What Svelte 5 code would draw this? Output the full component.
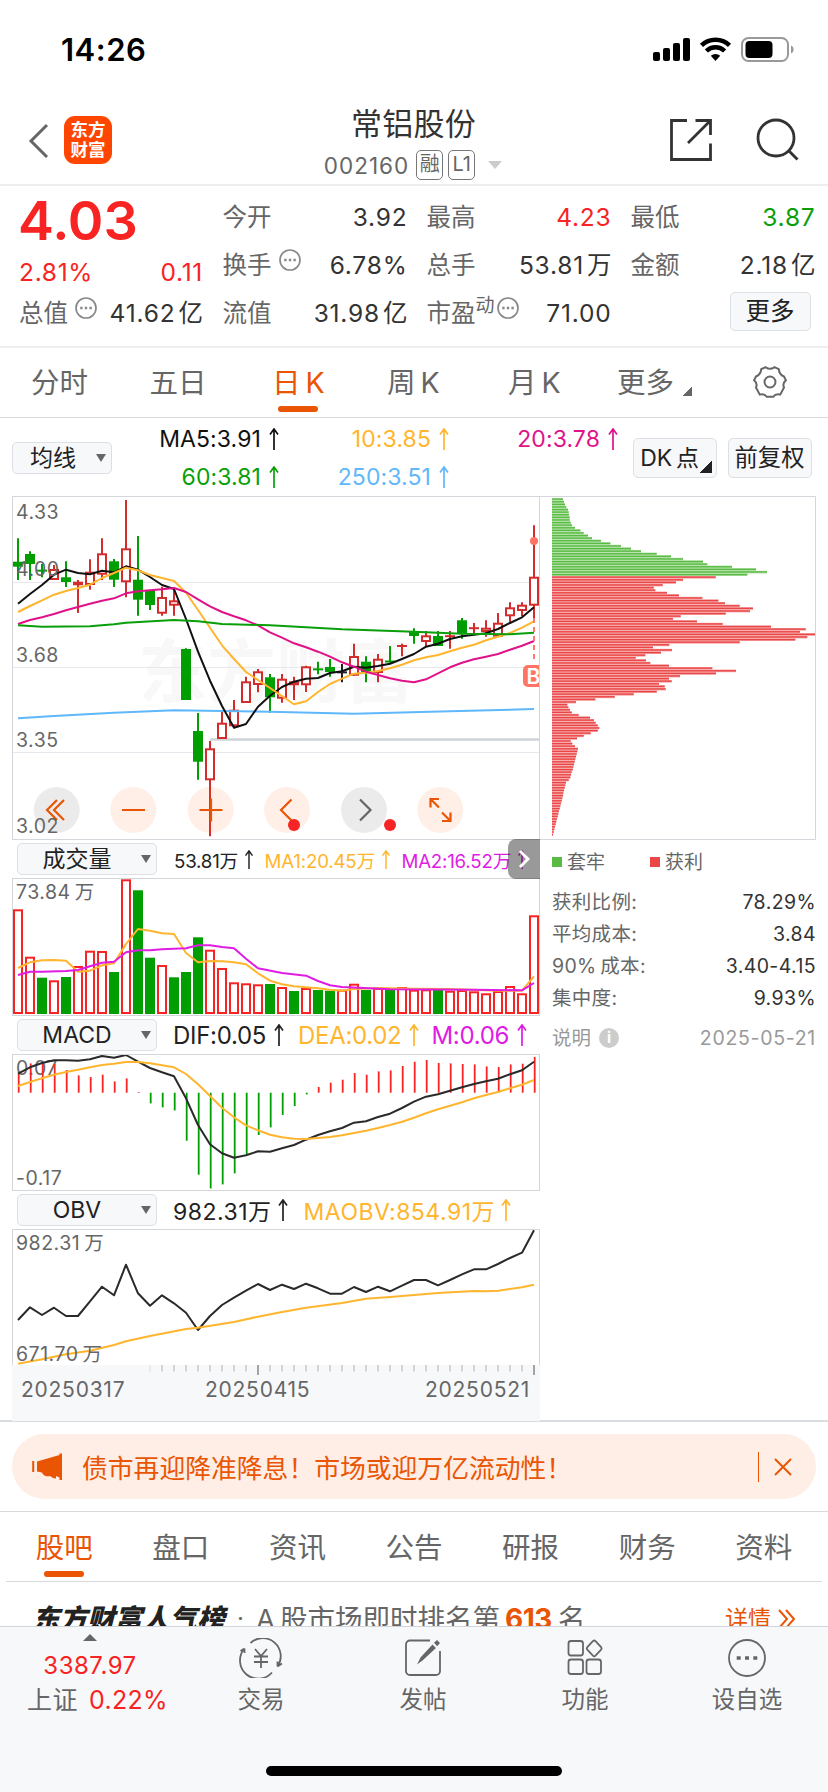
<script>
    // Horizontal layout shared by every chart: 44 trading days, 12px apart
    const STEP = 12;
    const FIRST_X = 6;
    const BAR_PITCH = 2.6;

    const quotes = [
        [
            { label: '今开', value: '3.92' },
            { label: '最高', value: '4.23', tone: 'up' },
            { label: '最低', value: '3.87', tone: 'down' }
        ],
        [
            { label: '换手', value: '6.78%', info: true },
            { label: '总手', value: '53.81', unit: '万' },
            { label: '金额', value: '2.18', unit: '亿' }
        ],
        [
            { label: '流值', value: '31.98', unit: '亿' },
            { label: '市盈', value: '71.00', sup: '动', info: true }
        ]
    ];

    const averages = [
        { text: 'MA5:3.91', tone: 'black' },
        { text: '10:3.85', tone: 'amber' },
        { text: '20:3.78', tone: 'pink' },
        { text: '60:3.81', tone: 'down' },
        { text: '250:3.51', tone: 'sky' }
    ];

    const costs = [
        { label: '获利比例:', value: '78.29%' },
        { label: '平均成本:', value: '3.84' },
        { label: '90%\u2009成本:', value: '3.40-4.15' },
        { label: '集中度:', value: '9.93%' }
    ];

    const newsTabs = ['股吧', '盘口', '资讯', '公告', '研报', '财务', '资料'];

    // [direction, high, body top, body bottom, low]
    const candles = [
        ['g', 42.3, 65.7, 70.7, 84], ['g', 55.3, 58, 68, 84], ['g', 68, 74, 75.3, 81.3], ['r', 69, 73, 84, 84],
        ['g', 65.3, 81.3, 86, 91], ['r', 84, 85.7, 89.3, 117], ['r', 63.3, 75.7, 89, 93.7], ['r', 42.3, 57.3, 78.7, 84],
        ['g', 63, 65.3, 83.7, 91], ['r', 4, 52.3, 86.3, 101.3], ['g', 40, 83.7, 103.7, 119.7], ['g', 94, 94, 109, 114],
        ['r', 90.7, 101, 117.7, 119.7], ['r', 91, 104.3, 109.7, 119.7], ['g', 152.3, 153, 204, 204], ['g', 217, 235, 265.7, 283.7],
        ['r', 245, 252.3, 284.3, 340.3], ['r', 214, 226.7, 243, 243], ['r', 204, 213.7, 230.3, 232], ['r', 180.7, 185.3, 207, 207],
        ['r', 173, 175.3, 189, 196.3], ['g', 178, 181.3, 201.3, 216.7], ['r', 178, 182.7, 202.7, 206.7], ['r', 180.7, 185.3, 189.3, 204],
        ['r', 169.7, 170.3, 189.3, 196], ['g', 165.7, 172.7, 174, 178.3], ['g', 163, 171, 176, 180.7], ['k', 168, 175.7, 177, 186.3],
        ['r', 147.7, 160, 179.7, 179.7], ['g', 160.3, 165.7, 176.3, 186.3], ['r', 158, 162.7, 177, 186.3], ['g', 150, 164.7, 166.3, 166.7],
        ['r', 147.7, 149.5, 150.5, 160.3], ['g', 132.3, 135, 140, 147.7], ['r', 135, 139.3, 146, 150.3], ['g', 135, 140, 150, 150],
        ['r', 135, 139.7, 140.7, 152.7], ['g', 122, 124.3, 137.7, 142.7], ['r', 127, 131.7, 132.7, 137.7], ['r', 124.3, 131.7, 136, 140.7],
        ['r', 117, 126.7, 140.7, 140.7], ['r', 106.3, 111.3, 120.3, 126.3], ['r', 106.3, 108.7, 115, 120], ['r', 29.3, 80.7, 109.7, 122.3]
    ];

    const ma5 = [107.7, 98, 89, 78.7, 73.7, 77, 78.3, 74.7, 76.3, 70.3, 73.7, 81, 89, 93, 123, 155.7, 184.7, 210, 231.7, 228, 210.7, 199.7, 191, 185.7, 182.7, 182, 177, 175.3, 170.7, 171.7, 170, 167.7, 163, 158, 150.7, 147.7, 143, 140.3, 138.7, 137.3, 133, 127, 121.3, 111.3];
    const ma10 = [116, 110, 104.3, 98.7, 95, 92, 88.7, 82, 77, 71.7, 74.3, 79, 82, 85, 96.7, 114, 131.7, 149.3, 163, 176, 184, 192, 200, 208.3, 205.3, 196, 188, 182.7, 177.7, 176.7, 175, 172.3, 168.7, 164.3, 161.3, 159, 155.3, 151.7, 148.7, 144.3, 140.7, 137, 131.7, 125.3];
    const ma20 = [128, 124, 121.3, 118, 114.3, 111, 107.7, 104.7, 102.3, 97.3, 95.3, 94.3, 93.3, 92, 96, 103.3, 110.3, 116, 120.3, 124.3, 129.3, 136.3, 141.7, 147.3, 151.3, 155.7, 160.7, 166.3, 170.7, 175.7, 179, 182.3, 184.7, 186.3, 183.3, 177.3, 171.3, 166.7, 163.3, 160.7, 158, 153.7, 149.7, 145];
    const ma60 = [[0, 129.3], [2, 130.7], [6, 130.3], [8, 128.3], [9, 126.7], [13, 124], [15, 125.3], [17, 128], [21, 129.3], [27, 133.3], [33, 135.7], [37, 137.7], [41, 138.3], [43, 136.7]];
    const ma250 = [[0, 222.3], [3, 220], [8, 216.7], [13, 214.3], [17, 215], [21, 215.7], [28, 217.7], [36, 215.3], [43, 213]];

    // Share of holders by price, highest price first
    const trapped = [11, 12, 13, 14.3, 16, 16.7, 17, 17.7, 17.7, 18.7, 20, 23, 28.3, 31.7, 36, 40, 49, 58.3, 69, 79, 89, 104.7, 119, 131, 151, 155.3, 180, 204, 215, 195.3];
    const profit = [163.7, 131, 124, 110.7, 101.7, 103.3, 115, 127, 150.3, 166.3, 173, 187.7, 201, 198, 173.7, 128.7, 121, 145, 170.7, 219, 253.7, 248, 263.3, 255.3, 243.3, 187.7, 117.3, 101, 120, 109, 93.3, 83.7, 94, 98.3, 117, 160.3, 184, 164, 128, 117, 119.7, 107, 112.7, 113.7, 104.7, 81.7, 62.7, 43.3, 24, 15.3, 16.3, 18, 19.7, 26.7, 38, 42, 43.7, 45.7, 47.3, 45.7, 38.7, 31.7, 25, 18.7, 20.3, 23, 26, 25.3, 24.7, 24, 23.3, 22.7, 22, 21.3, 20.7, 19.7, 19, 18.3, 16.7, 14, 13.3, 12.7, 12, 11.3, 11, 10.3, 9.7, 9, 8.3, 7.7, 7, 6.3, 5.7, 5, 4.3, 3.7, 3, 2.3, 1.7, 1];
    const holders = [...trapped, ...profit];

    const volumeUp = '11010111010010001111101010011010111011111111';
    const volumes = [104.7, 57.3, 36.3, 33.7, 37, 48, 63.3, 63, 42, 134.7, 123.7, 56.3, 49, 36.7, 42, 76.7, 64.3, 46, 31.7, 30.7, 29.7, 30, 27, 23, 26, 24, 23.3, 24.3, 30.3, 24, 26, 24.3, 27, 24.3, 24.7, 24.3, 23.3, 24, 22.7, 20.7, 23, 28, 20.7, 98.7];
    const volMa1 = [[0, 90], [1, 84.3], [2, 82.3], [3, 82], [4, 82.7], [5, 93.7], [6, 92.7], [7, 87.3], [8, 85.3], [9, 66], [10, 51], [11, 52.7], [12, 55.3], [13, 56], [14, 75], [15, 84.3], [16, 83], [17, 83.3], [18, 84.3], [19, 86.3], [20, 95.3], [21, 102.7], [22, 106.3], [23, 108.3], [24, 109.3], [25, 110.3], [26, 111.7], [27, 112.7], [28, 111], [30, 110], [33, 110.7], [36, 111], [40, 112.7], [42, 112.7], [43, 98.3]];
    const volMa2 = [[0, 97], [1, 93.7], [2, 93.7], [4, 93], [5, 92], [6, 88.3], [7, 84.7], [8, 83.7], [9, 74.3], [10, 72.3], [11, 72.3], [12, 71.3], [14, 70.3], [15, 67.3], [16, 67.3], [17, 69], [18, 70.3], [19, 80.7], [20, 90.3], [22, 95], [24, 97.7], [25, 103], [26, 107.3], [27, 109], [31, 111.3], [38, 111.7], [42, 112.3], [43, 105]];

    const macd = [19.3, 29.3, 29.3, 28.7, 22.7, 17.3, 15.7, 18, 11.3, 14.3, 0.7, -10.7, -14.7, -17.7, -48, -82, -95.7, -91.7, -80.7, -61.3, -42.3, -34.7, -22.3, -13.3, -1.7, 5.7, 10, 13, 19.7, 18, 21.3, 22.3, 26.7, 31, 32.7, 29.7, 29.3, 28.7, 28.3, 26.3, 25.7, 28.3, 29, 35.7];
    const dif = [19.7, 13.3, 9, 6.3, 6.3, 6.7, 5.3, 2, 3.7, 1, 7.7, 14, 18.3, 22.3, 44.3, 71, 90.3, 99.3, 103.7, 101.3, 97.3, 97.7, 94.3, 91, 85.7, 81, 77.3, 74, 68.7, 67.3, 63, 59.7, 54, 47.7, 42.7, 40.3, 36.7, 33.3, 30, 27.3, 24.7, 20.3, 16.3, 7.7];
    const dea = [32, 28, 24.3, 20.7, 18, 15.7, 13.3, 11, 9.7, 8, 8, 9.3, 11.3, 13.3, 20, 30.3, 42, 53.7, 63.3, 71.3, 76.3, 80.7, 83.3, 84.7, 85, 84, 83, 81.3, 79, 76.7, 74, 71, 67.7, 63.7, 59.3, 55.3, 51.7, 48.3, 44.3, 41, 38, 34.3, 30.7, 26];

    const obv = [91, 78.3, 86, 78.7, 87, 87, 72.3, 57.7, 66.3, 35.7, 64.3, 76.7, 66.3, 74.3, 83.7, 101, 87, 76, 68.7, 61.7, 55, 61, 55.7, 60, 54.7, 59.3, 64.7, 64.7, 58, 63, 57.7, 62.3, 56.7, 51, 51, 56.3, 51, 45.3, 40.3, 40.3, 35, 29, 23.7, 1.3];
    const maObv = [[0, 134.7], [2, 130.3], [4, 125.3], [6, 121.7], [8, 116], [9, 112.3], [11, 107], [14, 100], [15, 98.7], [18, 93], [20, 87.7], [22, 83], [24, 78.7], [27, 74], [29, 69.7], [31, 68], [35, 64], [38, 62], [39, 62.3], [40, 61.7], [42, 58.3], [43, 55.7]];

    const ticks = Array.from({ length: 33 }, (_, i) => i + 11);

    const x = (i) => FIRST_X + i * STEP;

    // Accepts plain y values (one per day) or sparse [day, y] pairs
    function line(points) {
        return points
            .map((p, i) => (Array.isArray(p) ? `${x(p[0])},${p[1]}` : `${x(i)},${p}`))
            .join(' ');
    }
</script>

{#snippet arrow()}
    <svg class="arrow" viewBox="0 0 10 22" width="10" height="22">
        <path d="M5 22V1M1 6.5L5 1l4 5.5" />
    </svg>
{/snippet}

{#snippet info()}
    <svg class="info" viewBox="0 0 22 22" width="22" height="22">
        <circle cx="11" cy="11" r="10" />
        <path d="M5.2 11h2.4M9.8 11h2.4M14.4 11h2.4" />
    </svg>
{/snippet}

{#snippet picker(name)}
    <button class="picker">
        <span>{name}</span>
        <i class="caret"></i>
    </button>
{/snippet}

<div class="page">
    <div class="status">
        <span class="clock">14:26</span>
        <svg viewBox="0 0 142 26" width="142" height="26">
            <rect x="0" y="15" width="7" height="9" rx="2" />
            <rect x="10" y="11" width="7" height="13" rx="2" />
            <rect x="20" y="6" width="7" height="18" rx="2" />
            <rect x="30" y="1" width="7" height="23" rx="2" />
            <path d="M48.5 8.4A20 20 0 0 1 76.5 8.4" class="wifi" />
            <path d="M53.4 14A13 13 0 0 1 71.6 14" class="wifi" />
            <path d="M57.8 18.8a7 7 0 0 1 9.4 0L62.5 24z" />
            <rect x="89" y="1" width="46" height="23" rx="6.5" class="shell" />
            <rect x="92.5" y="4" width="27" height="17" rx="4" />
            <path d="M138 8.500c3.400 1.200 3.400 6.800 0 8z" class="tip" />
        </svg>
    </div>

    <header>
        <div class="side">
            <svg viewBox="0 0 22 36" width="22" height="36" class="back"><path d="M19 2L3 18l16 16" /></svg>
            <div class="brand"><span>东方</span><span>财富</span></div>
        </div>
        <div class="title">
            <h1>常铝股份</h1>
            <div class="code">
                <span class="num">002160</span>
                <span class="tag">融</span>
                <span class="tag">L1</span>
                <i class="drop"></i>
            </div>
        </div>
        <div class="side end">
            <svg viewBox="0 0 44 44" width="44" height="44" class="tool">
                <path d="M18 2.500H2.500v39h39V25.500M26.500 2.500h15V17M41 3L19 25" />
            </svg>
            <svg viewBox="0 0 44 44" width="44" height="44" class="tool">
                <circle cx="20" cy="20" r="18" />
                <path d="M32.500 32.500L41.500 41.500" />
            </svg>
        </div>
    </header>

    <section class="summary">
        <div class="price">
            <strong>4.03</strong>
            <div class="change"><span>2.81%</span><span>0.11</span></div>
            <div class="cell">
                <span class="label">总值{@render info()}</span>
                <span class="value">41.62<em>亿</em></span>
            </div>
        </div>
        <div class="quotes">
            {#each quotes as row}
                {#each row as q}
                    <div class="cell">
                        <span class="label">{q.label}{#if q.sup}<small>{q.sup}</small>{/if}{#if q.info}{@render info()}{/if}</span>
                        <span class="value {q.tone ?? ''}">{q.value}{#if q.unit}<em>{q.unit}</em>{/if}</span>
                    </div>
                {/each}
            {/each}
            <div class="cell last"><button class="more">更多</button></div>
        </div>
    </section>

    <nav class="periods">
        <span>分时</span>
        <span>五日</span>
        <span class="active">日<em>K</em></span>
        <span>周<em>K</em></span>
        <span>月<em>K</em></span>
        <span>更多<i class="corner"></i></span>
        <svg viewBox="1.500 1.500 31 31" width="34" height="34">
            <path d="M13 3.500Q17 6.500 21 3.500L25 5.300Q25.300 10.300 29.800 12L31.500 15.500Q28 18.500 29.800 22L26.300 28.500Q22 27.500 20 30.500H14Q12 27.500 7.700 28.500L4.200 22Q6 18.500 2.500 15.500L4.200 12Q8.700 10.300 9 5.300Z" />
            <circle cx="17" cy="17" r="5" />
        </svg>
    </nav>

    <div class="averages">
        <button class="picker small"><span>均线</span><i class="caret"></i></button>
        <div class="ma-grid">
            {#each averages as ma}
                <span class={ma.tone}>{ma.text}{@render arrow()}</span>
            {/each}
        </div>
        <button class="chip">DK&thinsp;点<i class="corner"></i></button>
        <button class="chip">前复权</button>
    </div>

    <section class="charts">
        <div class="left">
            <svg viewBox="0 0 528 344" width="528" height="344">
                <text x="126" y="201" class="watermark">东方财富</text>
                <path d="M0 86.500H528M0 171.500H528M0 256.500H528" class="grid" />
                <path d="M198 243.500H528" class="support" />
                {#each candles as [dir, high, top, bottom, low], i}
                    <g class="candle {dir}">
                        <path d="M{x(i)} {high}V{low}" />
                        {#if dir === 'r' && bottom - top > 2}
                            <rect x={x(i) - 4} y={top + 1} width="8" height={bottom - top - 2} />
                        {:else if bottom - top > 2}
                            <rect x={x(i) - 5} y={top} width="10" height={bottom - top} />
                        {:else}
                            <path d="M{x(i) - 5} {(top + bottom) / 2}h10" />
                        {/if}
                    </g>
                {/each}
                <polyline points={line(ma250)} class="line sky" />
                <polyline points={line(ma5)} class="line black" />
                <polyline points={line(ma10)} class="line amber" />
                <polyline points={line(ma20)} class="line pink" />
                <polyline points={line(ma60)} class="line green" />

                <path d="M522 122V166" class="signal" />
                <circle cx="522" cy="45" r="4" class="mark" />
                <rect x="511" y="169" width="24" height="22" rx="5" class="mark" />
                <text x="514.500" y="187.500" class="buy">B</text>

                <circle cx="44.700" cy="314" r="23" class="knob grey" />
                <circle cx="121.300" cy="314" r="23" class="knob" />
                <circle cx="198.700" cy="314" r="23" class="knob" />
                <circle cx="275" cy="314" r="23" class="knob" />
                <circle cx="352" cy="314" r="23" class="knob grey" />
                <circle cx="428.300" cy="314" r="23" class="knob" />
                <path d="M45 304L35 314l10 10M52 304L42 314l10 10" class="glyph" />
                <path d="M110 314h23M187.500 314h23M199 302.500v23" class="glyph" />
                <path d="M279.500 303.500L269 314l10.500 10.500" class="glyph" />
                <path d="M348 303.500L358.500 314L348 324.500" class="glyph dark" />
                <path d="M427 303H418.500V311.500M419 303.500l8 8M430 325h8.500V316.500M438 324.500l-8-8" class="glyph" />
                <circle cx="282" cy="329" r="6" class="dot" />
                <circle cx="378" cy="329" r="6" class="dot" />

                <g class="scale">
                    <text x="4" y="23">4.33</text>
                    <text x="4" y="80">4.00</text>
                    <text x="4" y="166">3.68</text>
                    <text x="4" y="251">3.35</text>
                    <text x="4" y="337">3.02</text>
                </g>
                <rect x="0.500" y="0.500" width="527" height="343" class="frame" />
            </svg>

            <div class="bar volume">
                {@render picker('成交量')}
                <span>53.81万{@render arrow()}</span>
                <span class="amber">MA1:20.45万{@render arrow()}</span>
                <span class="purple">MA2:16.52万{@render arrow()}</span>
                <button class="expand" aria-label="展开">
                    <svg viewBox="0 0 12 20" width="12" height="20"><path d="M2 2l8 8-8 8" /></svg>
                </button>
            </div>
            <svg viewBox="0 0 528 138" width="528" height="138">
                {#each volumes as h, i}
                    {#if volumeUp[i] === '1'}
                        <rect x={x(i) - 4} y={137 - h} width="8" height={h - 2} class="vol-up" />
                    {:else}
                        <rect x={x(i) - 5} y={136 - h} width="10" height={h} class="vol-down" />
                    {/if}
                {/each}
                <polyline points={line(volMa1)} class="line amber" />
                <polyline points={line(volMa2)} class="line purple" />
                <text x="4" y="21" class="scale">73.84&thinsp;万</text>
                <rect x="0.500" y="0.500" width="527" height="137" class="frame" />
            </svg>

            <div class="bar macd">
                {@render picker('MACD')}
                <span>DIF:0.05{@render arrow()}</span>
                <span class="amber">DEA:0.02{@render arrow()}</span>
                <span class="purple">M:0.06{@render arrow()}</span>
            </div>
            <svg viewBox="0 0 528 137" width="528" height="137">
                <text x="4" y="21" class="scale">0.07</text>
                <text x="4" y="131" class="scale">-0.17</text>
                {#each macd as v, i}
                    <path d="M{x(i) + 0.7} 38.700v{-v}" class={v > 0 ? 'hist-up' : 'hist-down'} />
                {/each}
                <polyline points={line(dif)} class="line ink" />
                <polyline points={line(dea)} class="line amber" />
                <rect x="0.500" y="0.500" width="527" height="136" class="frame" />
            </svg>

            <div class="bar obv">
                {@render picker('OBV')}
                <span>982.31万{@render arrow()}</span>
                <span class="amber">MAOBV:854.91万{@render arrow()}</span>
            </div>
            <svg viewBox="0 0 528 136" width="528" height="136">
                <polyline points={line(obv)} class="line ink" />
                <polyline points={line(maObv)} class="line amber" />
                <text x="4" y="21" class="scale">982.31&thinsp;万</text>
                <text x="4" y="132" class="scale">671.70&thinsp;万</text>
                <path d="M0.500 136V0.500H527.500V136" class="frame" />
            </svg>
            <div class="dates">
                <svg viewBox="0 0 528 12" width="528" height="12">
                    {#each ticks as i}
                        {#if i === 20 || i === 43}
                            <path d="M{x(i)} 0v10" class="major" />
                        {:else}
                            <path d="M{x(i)} 0v6.500" class:faint={i === 11} />
                        {/if}
                    {/each}
                </svg>
                <div class="days"><span>20250317</span><span>20250415</span><span>20250521</span></div>
            </div>
        </div>

        <div class="right">
            <svg viewBox="0 0 276 344" width="276" height="344">
                {#each holders as w, i}
                    <rect x="12" y={2 + i * BAR_PITCH} width={w} height="2.600" class={i < trapped.length ? 'trap-soft' : 'gain-soft'} />
                    <rect x="12" y={2.5 + i * BAR_PITCH} width={w} height="1.300" class={i < trapped.length ? 'trap' : 'gain'} />
                {/each}
                <path d="M0 0.500H275.500V343.500H0" class="frame" />
            </svg>
            <div class="legend">
                <span><i class="trap-key"></i>套牢</span>
                <span><i class="gain-key"></i>获利</span>
            </div>
            <dl>
                {#each costs as c}
                    <div><dt>{c.label}</dt><dd>{c.value}</dd></div>
                {/each}
                <div class="note">
                    <dt>说明<b>i</b></dt>
                    <dd>2025-05-21</dd>
                </div>
            </dl>
        </div>
    </section>

    <div class="notice-wrap">
        <div class="notice">
            <svg viewBox="0 0 32 28" width="32" height="28">
                <path d="M32 0.500v26.500h-2.500v-2.500L26 23v2.500c-3 0-4-1-6-2.500-2 1-7 0-8-3.500L7 18.500V8.500L29.500 2V0.500zM2.200 8h2v11h-2z" />
            </svg>
            <p>债市再迎降准降息！市场或迎万亿流动性！</p>
            <i class="rule"></i>
            <svg viewBox="0 0 18 18" width="18" height="18" class="close"><path d="M1 1l16 16M17 1L1 17" /></svg>
        </div>
    </div>

    <nav class="news">
        {#each newsTabs as tab, i}
            <span class:active={i === 0}>{tab}</span>
        {/each}
    </nav>

    <div class="rank">
        <b class="logo">东方财富人气榜</b>
        <span class="point">·</span>
        <span class="text">A&thinsp;股市场即时排名第</span>
        <b class="place">613</b>
        <span class="text">名</span>
        <span class="detail">详情</span>
        <svg viewBox="0 0 18 20" width="18" height="20"><path d="M1 1l8 9-8 9M8 1l8 9-8 9" /></svg>
    </div>

    <footer>
        <div class="index">
            <i class="up-caret"></i>
            <span class="point-value">3387.97</span>
            <span class="index-row">上证 <b>0.22%</b></span>
        </div>
        <div class="action">
            <svg viewBox="0 0 44 40" width="44" height="40">
                <path d="M11.500 5A18 18 0 0 1 38.500 28.500M38.500 28.500V23.500M38.500 28.500L43 25.500M33 34.500A18 18 0 0 1 5.500 10.500M5.500 10.500L1.500 13M5.500 10.500V15" />
                <path d="M16 11l6 7 6-7M22 18v12M15 18.500h14M15 24h14" />
            </svg>
            <span>交易</span>
        </div>
        <div class="action">
            <svg viewBox="0 0 44 40" width="44" height="40">
                <path d="M29 2.500H9a4 4 0 0 0-4 4V33a4 4 0 0 0 4 4H35a4 4 0 0 0 4-4V13" />
                <path d="M31.500 6.500l3.500 3.500L21.500 22.500 16 26.500l3.500-7zM33 4.700l3-2.700 3 3-2.800 3.200z" class="solid" />
            </svg>
            <span>发帖</span>
        </div>
        <div class="action">
            <svg viewBox="0 0 44 40" width="44" height="40">
                <rect x="5.500" y="3" width="14.500" height="14.500" rx="2.500" />
                <rect x="5.500" y="21.500" width="14.500" height="14.500" rx="2.500" />
                <rect x="23.500" y="21.500" width="14.500" height="14.500" rx="2.500" />
                <path d="M29.900 3.100q1.300-1.200 2.600 0l5.600 6q1.200 1.300 0 2.600l-5.600 6q-1.300 1.200-2.600 0l-5.600-6q-1.200-1.300 0-2.600z" />
            </svg>
            <span>功能</span>
        </div>
        <div class="action">
            <svg viewBox="0 0 44 40" width="44" height="40">
                <circle cx="22" cy="20" r="18" />
                <path d="M11.700 20h4M20 20h4M28.300 20h4" class="dots" />
            </svg>
            <span>设自选</span>
        </div>
        <i class="home"></i>
    </footer>
</div>

<style>
    :global(body) {
        background: #fff;
    }

    .page {
        --orange: #ea5504;
        --red: #f82323;
        --grey: #666;
        width: 828px;
        height: 1792px;
        overflow: hidden;
        display: flex;
        flex-direction: column;
        background: #fff;
        color: #333;
        font-family: Inter, 'Noto Sans CJK SC', sans-serif;
        font-size: 24px;
    }

    .page * {
        box-sizing: border-box;
    }

    svg {
        display: block;
        flex: none;
        fill: none;
    }

    i,
    em {
        font-style: normal;
        flex: none;
    }

    button {
        font: inherit;
        color: #222;
        margin: 0;
        padding: 0;
        background: #f7f8fa;
        border: 1.5px solid #dcdfe4;
        border-radius: 5px;
        display: flex;
        align-items: center;
        justify-content: center;
    }

    .up { color: var(--red); }
    .down { color: #0a9f0a; }
    .black { color: #111; stroke: #111; }
    .amber { color: #ffb52e; stroke: #ffb52e; }
    .pink { color: #e0128a; stroke: #e0128a; }
    .sky { color: #5fb8fb; stroke: #5fb8fb; }
    .purple { color: #e01ce4; stroke: #e01ce4; }
    .green { stroke: #0a9f0a; }
    .ink { stroke: #2a2a2a; }

    /* Status bar */
    .status {
        height: 98px;
        padding: 1px 33px 0 61px;
        display: flex;
        justify-content: space-between;
        align-items: center;
        color: #000;
    }

    .clock {
        font-size: 31px;
        font-weight: 600;
        letter-spacing: 0.5px;
    }

    .status svg {
        fill: #000;
    }

    .status .wifi {
        fill: none;
        stroke: #000;
        stroke-width: 4.5;
    }

    .status .shell {
        fill: none;
        stroke: #999;
        stroke-width: 2;
    }

    .status .tip {
        fill: #999;
    }

    /* Title bar */
    header {
        height: 88px;
        border-bottom: 2px solid #eee;
        display: flex;
        justify-content: space-between;
    }

    .side {
        width: 200px;
        padding: 18px 0 0 28px;
        display: flex;
        gap: 14px;
    }

    .side.end {
        padding: 20px 28px 0 0;
        justify-content: flex-end;
        gap: 43px;
    }

    .back {
        margin-top: 7px;
        stroke: #666;
        stroke-width: 3;
    }

    .brand {
        width: 48px;
        height: 48px;
        border-radius: 11px;
        background: #ff4600;
        color: #fff;
        font-size: 17.5px;
        font-weight: 700;
        line-height: 20px;
        display: flex;
        flex-direction: column;
        align-items: center;
        justify-content: center;
    }

    .tool {
        stroke: #333;
        stroke-width: 2.8;
    }

    .title {
        display: flex;
        flex-direction: column;
        align-items: center;
    }

    h1 {
        margin: 8px 0 0 -1px;
        font-size: 31px;
        font-weight: 400;
        line-height: 36px;
        letter-spacing: 0.2px;
    }

    .code {
        height: 30px;
        margin: 8px 0 0 -2px;
        display: flex;
        align-items: center;
        gap: 5px;
        color: var(--grey);
    }

    .code .num {
        font-size: 22.5px;
        letter-spacing: 1px;
        margin-right: 2px;
    }

    .tag {
        width: 27px;
        height: 30px;
        border: 1.5px solid #777;
        border-radius: 5px;
        font-size: 20px;
        line-height: 27px;
        text-align: center;
    }

    .drop {
        margin-left: 8px;
        border: 7px solid transparent;
        border-top: 8px solid #ccc;
        border-bottom: 0;
    }

    /* Quote summary */
    .summary {
        height: 162px;
        padding: 7px 0 0 19px;
        border-bottom: 2px solid #eee;
        display: flex;
        gap: 19.5px;
    }

    .price {
        width: 184px;
        color: var(--red);
    }

    .price strong {
        display: block;
        height: 56px;
        margin-left: -1px;
        font-size: 54px;
        font-weight: 600;
        line-height: 56px;
    }

    .change {
        height: 40px;
        line-height: 47px;
        display: flex;
        justify-content: space-between;
        font-size: 24.5px;
        letter-spacing: 0.7px;
    }

    .quotes {
        display: grid;
        grid-template-columns: repeat(3, 185px);
        column-gap: 19px;
        grid-auto-rows: 48px;
    }

    .cell {
        height: 48px;
        line-height: 48px;
        display: flex;
        justify-content: space-between;
        white-space: nowrap;
    }

    .label {
        color: var(--grey);
        display: flex;
        font-size: 24.5px;
    }

    .label small {
        font-size: 19px;
        line-height: 34px;
    }

    .info {
        margin: 8px 0 0 7px;
        stroke: #888;
        stroke-width: 1.7;
    }

    .label small + .info {
        margin-left: 2px;
    }

    .info path {
        stroke-width: 2.4;
    }

    .value {
        color: #333;
        font-size: 24.5px;
        letter-spacing: 0.8px;
    }

    .value.up { color: var(--red); }
    .value.down { color: #0a9f0a; }

    .value em {
        margin-left: 3px;
        letter-spacing: 0;
    }

    .cell.last {
        justify-content: flex-end;
        align-items: center;
    }

    .more {
        width: 81px;
        height: 39px;
        margin: -4px 5px 0 0;
        font-size: 24.5px;
    }

    /* Period tabs */
    .periods {
        height: 70px;
        padding: 0 0 0 31px;
        border-bottom: 1.5px solid #d9dadd;
        display: grid;
        grid-template-columns: 118.5px 122.5px 115px 121px 109px 136px auto;
        color: var(--grey);
        font-size: 28.5px;
        line-height: 70px;
        white-space: nowrap;
    }

    .periods span {
        position: relative;
        justify-self: start;
    }

    .periods em {
        margin-left: 5px;
    }

    .periods svg {
        margin-top: 17px;
        stroke: var(--grey);
        stroke-width: 1.8;
    }

    .active {
        color: var(--orange);
        position: relative;
    }

    .active::after {
        content: '';
        position: absolute;
        left: 50%;
        bottom: 6px;
        width: 40px;
        height: 6px;
        margin-left: -20px;
        border-radius: 3px;
        background: var(--orange);
    }

    .corner {
        display: inline-block;
        width: 9px;
        height: 9px;
        margin: 0 0 -3px 9px;
        background: linear-gradient(135deg, transparent 50%, currentColor 50%);
    }

    /* Moving averages */
    .averages {
        height: 78px;
        padding: 1px 16px 0 12px;
        display: flex;
        align-items: center;
        color: #222;
    }

    .picker {
        width: 140px;
        height: 32px;
        padding: 0 5px 0 17px;
        justify-content: space-between;
        font-size: 23px;
        line-height: 28px;
        letter-spacing: 0;
    }

    .picker span {
        width: 84px;
    }

    .bar .picker span {
        justify-content: center;
    }

    .picker.small {
        width: 100px;
        padding-left: 17px;
    }

    .picker.small span {
        width: auto;
    }

    .caret {
        border: 5px solid transparent;
        border-top: 8px solid #666;
        border-bottom: 0;
    }

    .ma-grid {
        width: 506px;
        height: 76px;
        display: grid;
        grid-template-columns: 167px 170px 169px;
        grid-auto-rows: 38px;
        font-size: 23px;
        line-height: 38px;
        letter-spacing: 0.1px;
    }

    .ma-grid span,
    .bar span {
        display: flex;
        justify-content: flex-end;
        align-items: center;
        white-space: nowrap;
    }

    .ma-grid span {
        gap: 8px;
    }

    .arrow {
        stroke: currentColor;
        stroke-width: 1.7;
    }

    .chip {
        width: 84px;
        height: 40px;
        margin-left: 14.5px;
        font-size: 23px;
        letter-spacing: -0.2px;
        line-height: 36px;
        position: relative;
        white-space: nowrap;
    }

    .chip:last-child {
        margin-left: 11px;
        font-size: 23.3px;
        letter-spacing: 0;
    }

    .chip .corner {
        width: 12px;
        height: 12px;
        margin: 18px -3px 0 1px;
    }

    /* Charts */
    .charts {
        height: 926px;
        padding-left: 12px;
        border-bottom: 2px solid #d9dce0;
        display: flex;
    }

    .left {
        width: 528px;
    }

    .left > svg {
        overflow: hidden;
    }

    .frame {
        stroke: #d3d6da;
        stroke-width: 1;
    }

    .grid {
        stroke: #e6e8ee;
    }

    .support {
        stroke: #d0d4d9;
        stroke-width: 2.5;
    }

    .watermark {
        fill: #f8f8f8;
        font-size: 69px;
        font-weight: 700;
    }

    .line {
        fill: none;
        stroke-width: 2;
        stroke-linejoin: round;
    }

    .candle path {
        stroke-width: 2;
    }

    .r path { stroke: #d32c2c; }
    .r rect { fill: #fff; stroke: #d32c2c; stroke-width: 2; }
    .g path { stroke: #019e01; }
    .g rect { fill: #019e01; }
    .k path { stroke: #222; }

    .signal {
        stroke: #ff7a6b;
        stroke-width: 2;
        stroke-dasharray: 5 4;
    }

    .mark {
        fill: #ff7565;
    }

    .buy {
        fill: #fff;
        font-size: 21px;
        font-weight: 600;
    }

    .knob {
        fill: rgba(255, 98, 16, 0.1);
    }

    .knob.grey {
        fill: rgba(0, 0, 0, 0.08);
    }

    .glyph {
        stroke: var(--orange);
        stroke-width: 2.2;
    }

    .glyph.dark {
        stroke: #666;
    }

    .dot {
        fill: #f62424;
    }

    .scale {
        fill: var(--grey);
        font-size: 19.5px;
        letter-spacing: 0.5px;
    }

    .vol-up {
        stroke: #f82323;
        stroke-width: 2;
        fill: #fff;
    }

    .vol-down {
        fill: #019e01;
    }

    .hist-up {
        stroke: #f82323;
        stroke-width: 1.8;
    }

    .hist-down {
        stroke: #019e01;
        stroke-width: 1.8;
    }

    .bar {
        height: 38px;
        padding-left: 5px;
        display: flex;
        align-items: center;
        position: relative;
        color: #222;
    }

    .bar span {
        stroke: none;
    }

    .bar > span {
        gap: 6px;
    }

    .volume {
        font-size: 18.7px;
        letter-spacing: -0.2px;
    }

    .volume .picker + span { margin-left: 17px; }
    .volume .amber,
    .volume .purple { margin-left: 10.5px; }

    .volume .arrow {
        height: 19px;
    }

    .macd {
        font-size: 24px;
        letter-spacing: -0.3px;
    }

    .macd > span { gap: 8px; margin-left: 14px; }
    .macd .picker + span { margin-left: 16px; }
    .macd > .purple { margin-left: 12px; }

    .obv {
        font-size: 23px;
        letter-spacing: 0.5px;
    }

    .obv > span { gap: 6px; margin-left: 16px; }

    .expand {
        position: absolute;
        right: 0;
        top: -1px;
        width: 32px;
        height: 40px;
        border: 0;
        border-radius: 8px 0 0 8px;
        background: rgba(0, 0, 0, 0.4);
    }

    .expand svg {
        stroke: #fff;
        stroke-width: 3;
    }

    .dates {
        height: 56px;
        background: #f7f8fa;
    }

    .dates path {
        stroke: #c8c8c8;
        stroke-width: 1.5;
    }

    .dates .faint {
        stroke: #e4e4e4;
    }

    .dates .major {
        stroke: #888;
    }

    .days {
        padding: 0 0 0 9px;
        display: grid;
        grid-template-columns: 184px 220px auto;
        color: var(--grey);
        font-size: 21px;
        line-height: 25px;
        letter-spacing: 0.75px;
    }

    /* Holder distribution */
    .trap { fill: #5abb44; }
    .trap-soft { fill: #a4dc97; }
    .gain { fill: #e84646; }
    .gain-soft { fill: #f79a9a; }

    .legend {
        height: 44px;
        padding-left: 12px;
        display: flex;
        gap: 45px;
        font-size: 19px;
        line-height: 43px;
        color: var(--grey);
    }

    .legend span {
        display: flex;
        align-items: center;
    }

    .legend i {
        width: 10px;
        height: 10px;
        margin-right: 5px;
    }

    .trap-key { background: #5abb44; }
    .gain-key { background: #ea4848; }

    dl {
        margin: 2px 0 0;
        padding: 0 0 0 12px;
        font-size: 19.5px;
        line-height: 32px;
    }

    dl div {
        display: flex;
        justify-content: space-between;
    }

    dt {
        color: var(--grey);
        display: flex;
        align-items: center;
        letter-spacing: 0.3px;
    }

    dd {
        margin: 0;
        letter-spacing: 0.4px;
    }

    .note {
        margin-top: 8px;
    }

    .note dt,
    .note dd {
        color: #999;
    }

    .note dt {
        letter-spacing: 0;
    }

    .note dd {
        letter-spacing: 0.7px;
    }

    .note b {
        width: 20px;
        height: 20px;
        margin-left: 8px;
        border-radius: 50%;
        background: #ccc;
        color: #fff;
        font-size: 15px;
        line-height: 20px;
        text-align: center;
    }

    /* Notice */
    .notice-wrap {
        height: 90px;
        padding: 12px 12px 0;
        border-bottom: 1.5px solid #d9dadd;
    }

    .notice {
        height: 65px;
        padding: 0 24px 0 18px;
        border-radius: 33px;
        background: #feeee5;
        color: var(--orange);
        display: flex;
        align-items: center;
    }

    .notice svg {
        fill: var(--orange);
    }

    .notice p {
        flex: 1;
        margin: 0 0 0 20px;
        padding-top: 4px;
        font-size: 25.8px;
        line-height: 32px;
        white-space: nowrap;
    }

    .rule {
        width: 1.5px;
        height: 30px;
        margin-right: 15px;
        background: var(--orange);
    }

    .notice .close {
        stroke: var(--orange);
        stroke-width: 2;
    }

    /* News tabs */
    .news {
        height: 70px;
        margin: 0 6px;
        border-bottom: 1.5px solid #d9dadd;
        display: grid;
        grid-template-columns: repeat(7, 1fr);
        color: var(--grey);
        font-size: 28.5px;
        line-height: 71px;
        text-align: center;
    }

    .rank {
        height: 44px;
        padding: 17px 32px 0 32px;
        overflow: hidden;
        display: flex;
        align-items: flex-start;
        line-height: 40px;
        white-space: nowrap;
    }

    .logo {
        width: 196px;
        color: #222;
        font-size: 27.5px;
        font-weight: 900;
        font-style: italic;
    }

    .point {
        margin: 0 12px 0 9px;
        color: var(--grey);
    }

    .rank .text {
        color: var(--grey);
        font-size: 27.5px;
    }

    .place {
        margin: 0 6px 0 5px;
        color: var(--orange);
        font-size: 28px;
        font-weight: 700;
        letter-spacing: -0.4px;
    }

    .detail {
        margin-left: auto;
        color: var(--orange);
        font-size: 23px;
    }

    .rank svg {
        margin: 10px 0 0 7px;
        stroke: var(--orange);
        stroke-width: 2;
    }

    /* Bottom bar */
    footer {
        flex: 1;
        border-top: 1.5px solid #cfd5db;
        background: #f7f8fa;
        display: flex;
        align-items: flex-start;
        position: relative;
        color: var(--grey);
    }

    .index {
        width: 180px;
        padding: 7px 0 0 15px;
        display: flex;
        flex-direction: column;
        align-items: center;
        white-space: nowrap;
    }

    .up-caret {
        margin-right: 15px;
        border: 7px solid transparent;
        border-top: 0;
        border-bottom: 7px solid #666;
    }

    .point-value {
        height: 34px;
        margin-top: 7px;
        margin-right: 15px;
        color: var(--red);
        line-height: 36px;
        letter-spacing: 0.5px;
    }

    .index-row {
        line-height: 36px;
        font-size: 25px;
        letter-spacing: 0.3px;
    }

    .index-row b {
        margin-left: 4px;
        color: var(--red);
        font-weight: 400;
    }

    .action {
        width: 162px;
        padding-top: 11px;
        display: flex;
        flex-direction: column;
        align-items: center;
        gap: 6px;
        font-size: 23.5px;
        line-height: 31px;
    }

    .action svg {
        stroke: var(--grey);
        stroke-width: 1.8;
    }

    .action .solid {
        fill: var(--grey);
        stroke: none;
    }

    .action .dots {
        stroke-width: 3.6;
    }

    .home {
        position: absolute;
        left: 266px;
        bottom: 16px;
        width: 296px;
        height: 10px;
        border-radius: 5px;
        background: #000;
    }
</style>
